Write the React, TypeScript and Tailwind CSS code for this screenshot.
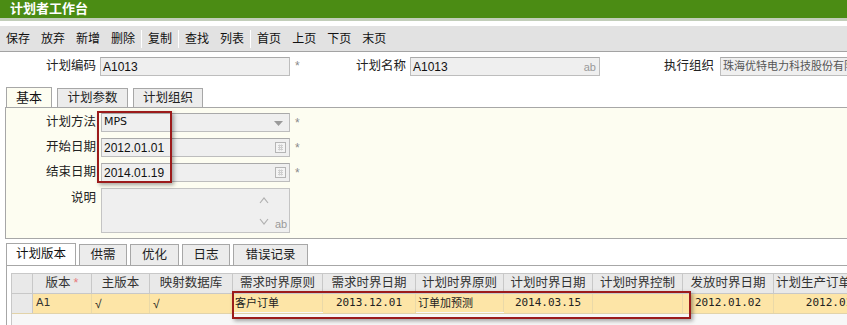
import React from "react";

const toolbarGroups = [
  ["保存", "放弃", "新增", "删除"],
  ["复制"],
  ["查找", "列表"],
  ["首页", "上页", "下页", "末页"],
];

const columns = [
  { title: "版本", w: "w-[59px]", star: true },
  { title: "主版本", w: "w-[58px]" },
  { title: "映射数据库", w: "w-[83px]" },
  { title: "需求时界原则", w: "w-[90px]" },
  { title: "需求时界日期", w: "w-[93px]" },
  { title: "计划时界原则", w: "w-[88px]" },
  { title: "计划时界日期", w: "w-[89px]" },
  { title: "计划时界控制", w: "w-[90px]" },
  { title: "发放时界日期", w: "w-[91px]" },
  { title: "计划生产订单日期", w: "w-[105px]" },
];

const mono = "font-['DejaVu_Sans_Mono',monospace] text-[11px]";

const row = [
  { text: "A1", cls: "pl-[3px] text-[11px] font-['DejaVu_Sans',sans-serif] font-medium text-[#333]" },
  { text: "√", cls: "pl-[3px] text-[12px]" },
  { text: "√", cls: "pl-[3px] text-[12px]" },
  { text: "客户订单", cls: "pl-[2px] text-[11px] self-start pt-[1px]" },
  { text: "2013.12.01", cls: `justify-center ${mono}` },
  { text: "订单加预测", cls: "pl-[2px] text-[11px] self-start pt-[1px]" },
  { text: "2014.03.15", cls: `justify-center ${mono}` },
  { text: "", cls: "" },
  { text: "2012.01.02", cls: `justify-center ${mono}` },
  { text: "2012.01.02", cls: `justify-end pr-[6px] ${mono}` },
];

const Star = () => <span className="shrink-0 pl-[5px] text-[#8a8a8a] text-[12px]">*</span>;

const Arrow = () => (
  <svg width="9" height="6" viewBox="0 0 9 6" className="absolute right-[6px] top-[7px]">
    <path d="M0 0h9L4.5 5z" fill="#9a9a9a" />
  </svg>
);

const CalIcon = () => (
  <svg width="11" height="11" viewBox="0 0 11 11" className="absolute right-[3px] top-[3px]">
    <rect x="0.5" y="0.5" width="10" height="10" fill="#f4f4f4" stroke="#b5b5b5" />
    <path d="M3 3.5h5M3 5.5h5M3 7.5h5M4.5 2.5v6M6.5 2.5v6" stroke="#cfcfcf" />
  </svg>
);

const Input = ({ w, children }: { w: string; children?: React.ReactNode }) => (
  <div className={`relative shrink-0 h-[19px] ${w} border border-[#bdbdbd] border-t-[#a9a9a9] bg-[#efefef] flex items-center pl-[2px] text-[12px] text-[#111] overflow-hidden`}>
    {children}
  </div>
);

export default function App() {
  return (
    <div className="relative w-[847px] h-[325px] overflow-hidden bg-white font-['Liberation_Sans','Noto_Sans_CJK_SC',sans-serif] text-[12px] text-[#222]">
      {/* title */}
      <div className="h-[18px] bg-[#4b8c14] pl-[10px] text-white font-bold text-[13px] leading-[18px]">计划者工作台</div>
      <div className="h-[3px] bg-[#c2ceba]" />
      <div className="h-[5px]" />

      {/* toolbar */}
      <div className="h-[26px] bg-[#e2e2e2] border-b border-[#a3a3a3] flex items-center pl-[6px]">
        {toolbarGroups.map((g, gi) => (
          <React.Fragment key={gi}>
            {gi > 0 && <div className="mx-[6px] w-px h-[18px] bg-[#b3b3b3] border-r border-white" />}
            <div className="flex gap-[11px]">
              {g.map((t) => (
                <span key={t} className="text-[12px] text-[#111]">{t}</span>
              ))}
            </div>
          </React.Fragment>
        ))}
      </div>

      {/* header fields */}
      <div className="mt-[5px] flex items-center h-[19px] text-[12.5px] text-[#222]">
        <div className="w-[96px] shrink-0 text-right">计划编码</div>
        <div className="ml-[4px] shrink-0">
          <Input w="w-[190px]">A1013</Input>
        </div>
        <div className="w-[10px] shrink-0"><Star /></div>
        <div className="w-[106px] shrink-0 text-right">计划名称</div>
        <div className="ml-[4px] shrink-0">
          <Input w="w-[190px]">
            A1013
            <span className="absolute right-[3px] top-[1px] text-[11px] text-[#9a9a9a]">ab</span>
          </Input>
        </div>
        <div className="w-[114px] shrink-0 text-right">执行组织</div>
        <div className="ml-[6px] shrink-0">
          <Input w="w-[150px]">
            <span className="text-[11px] text-[#555] whitespace-nowrap">珠海优特电力科技股份有限公司</span>
          </Input>
        </div>
      </div>

      {/* upper tabs */}
      <div className="mt-[12px] pl-[6px] flex gap-[5px] items-end h-[19px]">
        <div className="h-[20px] w-[46px] border border-b-0 border-[#a7a7a7] bg-[#fdfdf1] text-[13px] text-[#111] flex items-center justify-center relative z-10">基本</div>
        <div className="h-[19px] w-[71px] border border-b-0 border-[#a7a7a7] bg-[#ececec] flex items-center justify-center text-[12.5px]">计划参数</div>
        <div className="h-[19px] w-[70px] border border-b-0 border-[#a7a7a7] bg-[#ececec] flex items-center justify-center text-[12.5px]">计划组织</div>
      </div>
      <div className="ml-[5px] border-t border-l border-b border-[#a7a7a7] bg-[#fdfdf1] pt-[5px] pb-[5px] flex flex-col gap-[6px] text-[12.5px]">
        <div className="flex items-center h-[19px]">
          <div className="w-[90px] shrink-0 text-right">计划方法</div>
          <div className="ml-[5px]">
            <Input w="w-[189px]"><span className="text-[11px] font-['DejaVu_Sans',sans-serif]">MPS</span><Arrow /></Input>
          </div>
          <Star />
        </div>
        <div className="flex items-center h-[19px]">
          <div className="w-[90px] shrink-0 text-right">开始日期</div>
          <div className="ml-[5px]">
            <Input w="w-[189px]">2012.01.01<CalIcon /></Input>
          </div>
          <Star />
        </div>
        <div className="flex items-center h-[19px]">
          <div className="w-[90px] shrink-0 text-right">结束日期</div>
          <div className="ml-[5px]">
            <Input w="w-[189px]">2014.01.19<CalIcon /></Input>
          </div>
          <Star />
        </div>
        <div className="flex items-start h-[45px]">
          <div className="w-[90px] shrink-0 text-right pt-[1px]">说明</div>
          <div className="ml-[5px] relative h-[45px] w-[189px] border border-[#c4c4c4] bg-[#efefef]">
            <svg width="10" height="7" viewBox="0 0 10 7" className="absolute left-[157px] top-[8px]">
              <path d="M1 6l4-5 4 5" fill="none" stroke="#b0b0b0" strokeWidth="1.2" />
            </svg>
            <svg width="10" height="7" viewBox="0 0 10 7" className="absolute left-[157px] top-[29px]">
              <path d="M1 1l4 5 4-5" fill="none" stroke="#b0b0b0" strokeWidth="1.2" />
            </svg>
            <span className="absolute left-[173px] top-[27px] text-[11px] text-[#9a9a9a]">ab</span>
          </div>
        </div>
      </div>

      {/* lower tabs */}
      <div className="mt-[5px] pl-[6px] flex gap-[3px] items-end h-[21px]">
        <div className="h-[22px] w-[70px] border border-b-0 border-[#a7a7a7] bg-white text-[12.5px] text-[#111] flex items-center justify-center relative z-10">计划版本</div>
        <div className="h-[21px] w-[48px] border border-b-0 border-[#a7a7a7] bg-[#ececec] flex items-center justify-center text-[12.5px]">供需</div>
        <div className="h-[21px] w-[49px] border border-b-0 border-[#a7a7a7] bg-[#ececec] flex items-center justify-center text-[12.5px]">优化</div>
        <div className="h-[21px] w-[48px] border border-b-0 border-[#a7a7a7] bg-[#ececec] flex items-center justify-center text-[12.5px]">日志</div>
        <div className="h-[21px] w-[75px] border border-b-0 border-[#a7a7a7] bg-[#ececec] flex items-center justify-center text-[12.5px]">错误记录</div>
      </div>
      <div className="ml-[6px] border-t border-l border-[#a7a7a7] bg-white pt-[7px] pl-[4px] h-[70px]">
        <div className="border-l border-t border-[#c8c8c8] bg-[#f7f7f7] h-[60px]">
          <div className="flex h-[20px] bg-[#e9e9e9] border-b border-[#c8c8c8]">
            <div className="w-[21px] shrink-0 border-r border-[#c8c8c8]" />
            {columns.map((c) => (
              <div key={c.title} className={`${c.w} shrink-0 border-r border-[#c8c8c8] flex items-center justify-center whitespace-nowrap text-[12.5px] text-[#333]`}>
                {c.title}
                {c.star && <span className="ml-[3px] text-[#e87b7b]">*</span>}
              </div>
            ))}
          </div>
          <div className="flex h-[20px] border-b border-[#e2d3a9]">
            <div className="w-[21px] shrink-0 border-r border-[#c8c8c8] bg-[#e9e9e9]" />
            {columns.map((c, i) => (
              <div key={c.title} className={`${c.w} shrink-0 border-r border-[#ead9a8] bg-[#fde5a7] flex items-center whitespace-nowrap text-[#222] ${row[i].cls}`}>
                {row[i].text}
              </div>
            ))}
          </div>
        </div>
      </div>

      {/* annotation boxes */}
      <div className="absolute left-[97px] top-[111px] w-[75px] h-[72px] border-2 border-[#9c1b1b] shadow-[2px_2px_4px_rgba(0,0,0,0.35)]" />
      <div className="absolute left-[232px] top-[291px] w-[459px] h-[28px] border-2 border-[#9c1b1b] shadow-[2px_2px_4px_rgba(0,0,0,0.35)]" />
    </div>
  );
}
